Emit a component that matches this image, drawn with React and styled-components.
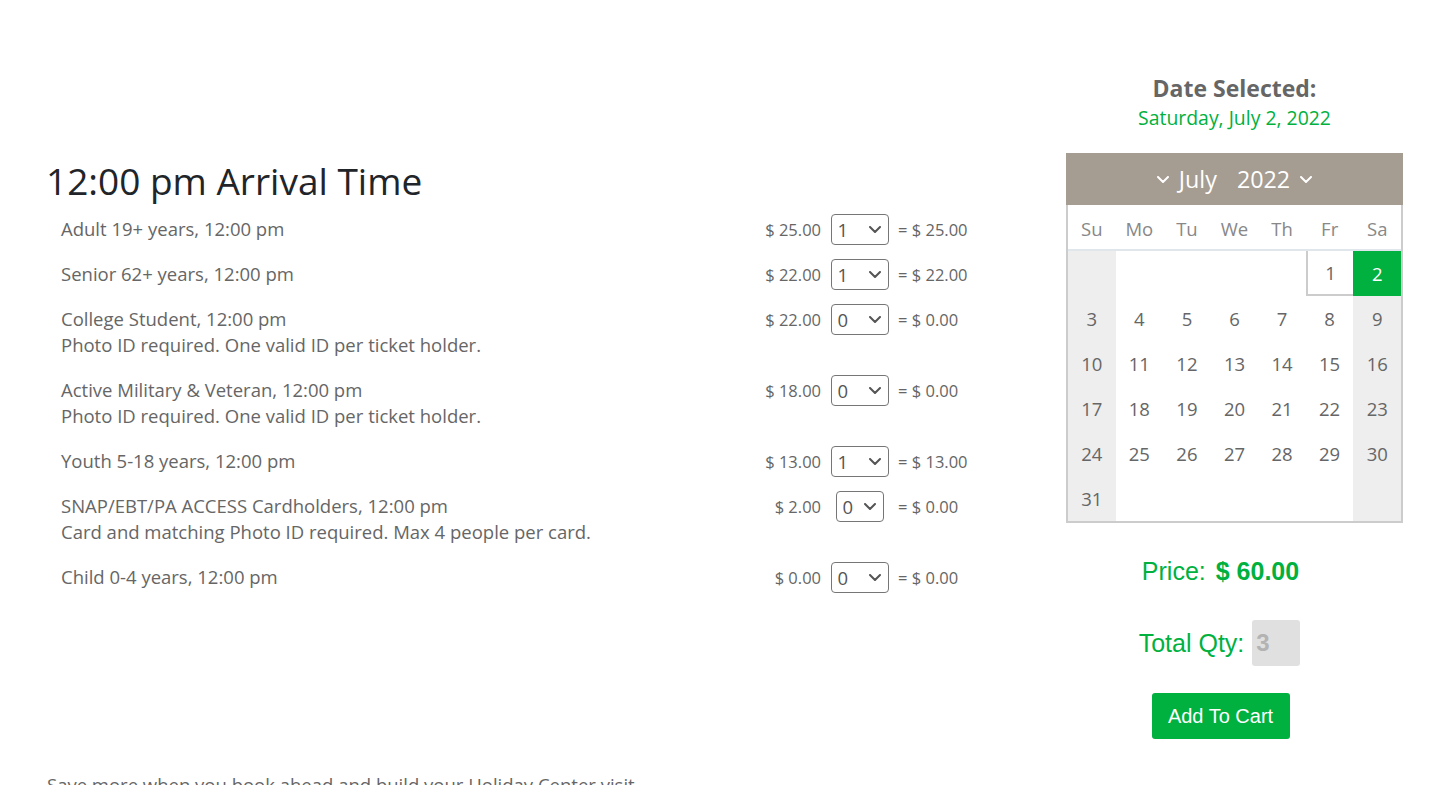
import React from "react";
import styled, { createGlobalStyle } from "styled-components";

const GREEN = "#00b140";

const Global = createGlobalStyle`
  html, body { margin: 0; padding: 0; background: #fff; }
  body { font-family: "Open Sans", "Liberation Sans", sans-serif; overflow: hidden; }
  * { box-sizing: border-box; }
`;

const Page = styled.div`
  width: 1449px;
`;

const Main = styled.div`
  display: flex;
  align-items: flex-start;
  padding-left: 46px;
`;

const LeftCol = styled.div`
  width: 962px;
  margin-top: 159px;
`;

const Heading = styled.h1`
  margin: 0 0 14px;
  font-size: 37px;
  line-height: 43px;
  font-weight: 400;
  color: #212529;
`;

const Row = styled.div`
  display: flex;
  align-items: flex-start;
  padding-left: 15px;
  margin-bottom: 19px;
`;

const Label = styled.div`
  flex: 1;
  font-size: 18.5px;
  line-height: 26px;
  color: #666;
`;

const Line = styled.div``;

const Pricing = styled.div`
  display: flex;
  align-items: center;
  height: 26px;
  font-size: 16.5px;
  color: #666;
`;

const Price = styled.div`
  width: 70px;
  text-align: right;
`;

const SelectCell = styled.div`
  width: 77px;
  display: flex;
  justify-content: center;
`;

const SelectWrap = styled.div`
  position: relative;
  width: ${(p) => p.$w}px;
  height: 31px;
`;

const Select = styled.select`
  appearance: none;
  -webkit-appearance: none;
  width: 100%;
  height: 100%;
  border: 1px solid #767676;
  border-radius: 4px;
  background: #fff;
  font-family: "Open Sans", sans-serif;
  font-size: 18.5px;
  color: #555;
  padding: 0 0 0 6px;
  outline: none;
`;

const Chevron = styled.span`
  position: absolute;
  right: 8px;
  top: 0;
  bottom: 0;
  display: flex;
  align-items: center;
  pointer-events: none;
`;

const Total = styled.div`
  width: 110px;
`;

const RightCol = styled.div`
  width: 337px;
  margin-left: 58px;
  padding-top: 72px;
  display: flex;
  flex-direction: column;
  align-items: center;
`;

const DateTitle = styled.div`
  font-size: 23px;
  line-height: 32px;
  font-weight: 700;
  color: #666;
`;

const DateValue = styled.div`
  font-size: 19.4px;
  line-height: 28px;
  color: ${GREEN};
  margin-bottom: 21px;
`;

const Calendar = styled.div`
  width: 337px;
`;

const CalHeader = styled.div`
  height: 52px;
  background: #a59c92;
  display: flex;
  align-items: center;
  justify-content: center;
  gap: 6px;
  color: #fff;
  font-size: 23.3px;
`;

const HeaderPart = styled.span`
  display: inline-flex;
  align-items: center;
  gap: 10px;
  margin-right: ${(p) => p.$mr || 0}px;
`;

const CalBody = styled.div`
  border: 2px solid #ccc;
  border-top: none;
`;

const WeekRow = styled.div`
  display: grid;
  grid-template-columns: repeat(7, 1fr);
  height: 46px;
  padding-top: 3px;
  border-bottom: 2px solid #dfe7ec;
`;

const WeekDay = styled.div`
  display: flex;
  align-items: center;
  justify-content: center;
  font-size: 18.5px;
  color: #888;
`;

const DayGrid = styled.div`
  display: grid;
  grid-template-columns: repeat(7, 1fr);
  grid-auto-rows: 45px;
`;

const Day = styled.div`
  display: flex;
  align-items: center;
  justify-content: center;
  font-size: 18.5px;
  color: ${(p) => (p.$selected ? "#fff" : "#666")};
  background: ${(p) => (p.$selected ? GREEN : p.$weekend ? "#eee" : "#fff")};
  border-left: ${(p) => (p.$bordered ? "2px solid #ccc" : "none")};
  border-bottom: ${(p) => (p.$bordered ? "2px solid #ccc" : "none")};
`;

const Summary = styled.div`
  display: flex;
  flex-direction: column;
  align-items: center;
  padding-right: 28px;
  font-family: "Liberation Sans", Arial, sans-serif;
  color: ${GREEN};
`;

const PriceLine = styled.div`
  margin-top: 33px;
  font-size: 25px;
  line-height: 30px;
  display: flex;
  gap: 10px;
`;

const Bold = styled.span`
  font-weight: 700;
`;

const QtyLine = styled.div`
  margin-top: 34px;
  display: flex;
  align-items: center;
  gap: 8px;
  font-size: 25px;
  margin-right: 2px;
`;

const QtyBox = styled.div`
  width: 48px;
  height: 46px;
  background: #e0e0e0;
  border-radius: 3px;
  color: #b3b3b3;
  font-weight: 700;
  font-size: 24px;
  display: flex;
  align-items: center;
  padding-left: 4px;
`;

const CartButton = styled.button`
  margin-top: 27px;
  width: 138px;
  height: 46px;
  border: none;
  border-radius: 3px;
  background: ${GREEN};
  color: #fff;
  font-family: "Liberation Sans", Arial, sans-serif;
  font-size: 20px;
`;

const Footer = styled.p`
  margin: 33px 0 0;
  padding-left: 47px;
  font-size: 18.5px;
  line-height: 26px;
  color: #666;
`;

const tickets = [
  { name: "Adult 19+ years, 12:00 pm", price: "$ 25.00", qty: 1, total: "= $ 25.00" },
  { name: "Senior 62+ years, 12:00 pm", price: "$ 22.00", qty: 1, total: "= $ 22.00" },
  { name: "College Student, 12:00 pm", note: "Photo ID required. One valid ID per ticket holder.", price: "$ 22.00", qty: 0, total: "= $ 0.00" },
  { name: "Active Military & Veteran, 12:00 pm", note: "Photo ID required. One valid ID per ticket holder.", price: "$ 18.00", qty: 0, total: "= $ 0.00" },
  { name: "Youth 5-18 years, 12:00 pm", price: "$ 13.00", qty: 1, total: "= $ 13.00" },
  { name: "SNAP/EBT/PA ACCESS Cardholders, 12:00 pm", note: "Card and matching Photo ID required. Max 4 people per card.", price: "$ 2.00", qty: 0, total: "= $ 0.00", narrow: true },
  { name: "Child 0-4 years, 12:00 pm", price: "$ 0.00", qty: 0, total: "= $ 0.00" },
];

const Down = ({ color = "#555", w = 12, h = 7, sw = 2 }) => (
  <svg width={w} height={h} viewBox="0 0 12 7" fill="none" style={{ display: "block" }}>
    <path d="M1 1l5 5 5-5" stroke={color} strokeWidth={sw} strokeLinecap="round" strokeLinejoin="round" />
  </svg>
);

const days = [];
for (let i = 0; i < 5; i++) days.push(null);
for (let d = 1; d <= 31; d++) days.push(d);
while (days.length < 42) days.push(null);

export default function App() {
  return (
    <Page>
      <Global />
      <Main>
        <LeftCol>
          <Heading>12:00 pm Arrival Time</Heading>
          {tickets.map((t) => (
            <Row key={t.name}>
              <Label>
                <Line>{t.name}</Line>
                {t.note && <Line>{t.note}</Line>}
              </Label>
              <Pricing>
                <Price>{t.price}</Price>
                <SelectCell>
                  <SelectWrap $w={t.narrow ? 48 : 58}>
                    <Select defaultValue={t.qty}>
                      {[0, 1, 2, 3, 4, 5, 6, 7, 8, 9].map((n) => (
                        <option key={n} value={n}>{n}</option>
                      ))}
                    </Select>
                    <Chevron>
                      <Down />
                    </Chevron>
                  </SelectWrap>
                </SelectCell>
                <Total>{t.total}</Total>
              </Pricing>
            </Row>
          ))}
        </LeftCol>
        <RightCol>
          <DateTitle>Date Selected:</DateTitle>
          <DateValue>Saturday, July 2, 2022</DateValue>
          <Calendar>
            <CalHeader>
              <HeaderPart $mr={14}>
                <Down color="#fff" w={12} h={7} sw={2} />
                July
              </HeaderPart>
              <HeaderPart>
                2022
                <Down color="#fff" w={12} h={7} sw={2} />
              </HeaderPart>
            </CalHeader>
            <CalBody>
              <WeekRow>
                {["Su", "Mo", "Tu", "We", "Th", "Fr", "Sa"].map((w) => (
                  <WeekDay key={w}>{w}</WeekDay>
                ))}
              </WeekRow>
              <DayGrid>
                {days.map((d, i) => {
                  const col = i % 7;
                  return (
                    <Day
                      key={i}
                      $weekend={col === 0 || col === 6}
                      $selected={d === 2}
                      $bordered={d === 1}
                    >
                      {d}
                    </Day>
                  );
                })}
              </DayGrid>
            </CalBody>
          </Calendar>
          <Summary>
            <PriceLine>
              <span>Price:</span>
              <Bold>$ 60.00</Bold>
            </PriceLine>
            <QtyLine>
              <span>Total Qty:</span>
              <QtyBox>3</QtyBox>
            </QtyLine>
            <CartButton>Add To Cart</CartButton>
          </Summary>
        </RightCol>
      </Main>
      <Footer>Save more when you book ahead and build your Holiday Center visit.</Footer>
    </Page>
  );
}
